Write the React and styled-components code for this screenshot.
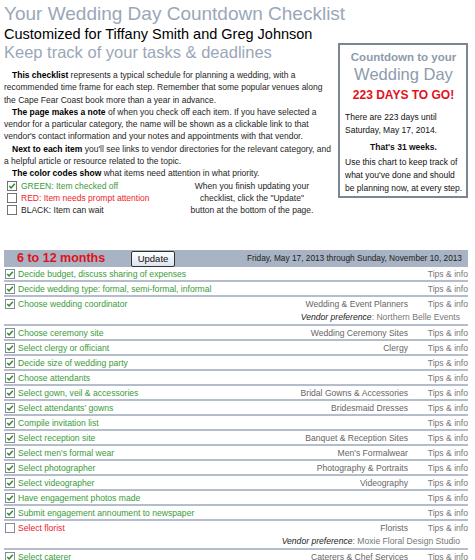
import React from 'react'
import styled, { createGlobalStyle } from 'styled-components'

const Global = createGlobalStyle`
  body {
    margin: 0;
    background: #fff;
    font-family: "Liberation Sans", Arial, sans-serif;
    color: #111;
  }
`

const Page = styled.div`
  width: 475px;
  padding: 2px 7px 0 4px;
  box-sizing: border-box;
`

const Title = styled.h1`
  margin: 0;
  font-weight: normal;
  font-size: 19px;
  line-height: 24px;
  color: #9aa7b8;
  white-space: nowrap;
`

const Customized = styled.div`
  font-size: 14.5px;
  line-height: 16px;
  color: #000;
`

const Subtitle = styled.h2`
  margin: 0;
  font-weight: normal;
  font-size: 16.5px;
  line-height: 20px;
  color: #9aa7b8;
  white-space: nowrap;
`

const Top = styled.div`
  display: flex;
  justify-content: space-between;
  align-items: flex-start;
`

const Intro = styled.div`
  width: 334px;
  padding-top: 7px;
  font-size: 8.5px;
  line-height: 12.3px;
  color: #1e1e1e;
  white-space: nowrap;
  p {
    margin: 0;
  }
  b {
    color: #000;
    margin-left: 8px;
  }
`

const Legend = styled.div`
  display: flex;
  justify-content: space-between;
`

const LegendList = styled.div`
  display: flex;
  flex-direction: column;
`

const LegendItem = styled.div`
  display: flex;
  align-items: center;
  gap: 4px;
  padding-left: 3px;
  height: 12.3px;
  color: ${p => p.$color};
`

const LegendNote = styled.div`
  text-align: center;
  width: 124px;
  margin-right: 24px;
`

const Box = styled.div`
  width: 130px;
  box-sizing: border-box;
  margin-top: 1px;
  border: 2px solid #7c8592;
  padding: 5px 4px 1px 5px;
  font-size: 8.5px;
  line-height: 13.3px;
  color: #111;
  white-space: nowrap;
  p { margin: 0; }
`

const BoxHead = styled.div`
  text-align: center;
  font-weight: bold;
  font-size: 11.5px;
  line-height: 14px;
  color: #8e9bab;
`

const BoxBig = styled.div`
  text-align: center;
  font-size: 16.5px;
  line-height: 20px;
  color: #8e9bab;
`

const BoxRed = styled.div`
  text-align: center;
  font-weight: bold;
  font-size: 12px;
  line-height: 14px;
  color: #e0121c;
  margin: 4px 0 9px;
`

const BoxCenter = styled.p`
  text-align: center;
  font-weight: bold;
  line-height: 14px;
  margin: 2px 0 2px !important;
`

const Section = styled.div`
  margin-top: 33px;
  font-size: 8.6px;
`

const SectionBar = styled.div`
  display: flex;
  align-items: center;
  height: 17px;
  background: #a8b3c3;
  padding: 0 6px 0 13px;
`

const Months = styled.div`
  width: 114px;
  font-weight: bold;
  font-size: 12.5px;
  color: #e0121c;
`

const UpdateButton = styled.button`
  font-family: "Liberation Sans", Arial, sans-serif;
  font-size: 9.5px;
  width: 44px;
  height: 16px;
  padding: 0;
  border: 1px solid #333;
  border-radius: 2px;
  background: linear-gradient(#fff, #dde3ee);
  color: #111;
  margin-top: 1px;
`

const Dates = styled.div`
  margin-left: auto;
  font-size: 8.3px;
  color: #222;
`

const Row = styled.div`
  border-top: ${p => (p.$first ? 'none' : '2px solid #b4bdca')};
  padding-top: 1px;
`

const RowMain = styled.div`
  display: grid;
  grid-template-columns: 1fr auto 60px;
  align-items: center;
  height: 12px;
`

const Task = styled.div`
  display: flex;
  align-items: center;
  gap: 3px;
  padding-left: 1px;
  color: ${p => (p.$done ? '#3a9b3a' : '#ee1c2a')};
`

const Vendor = styled.div`
  text-align: right;
  color: #666;
`

const Tips = styled.div`
  text-align: right;
  color: #777;
`

const Pref = styled.div`
  text-align: right;
  padding-right: 8px;
  color: #777;
  line-height: 14px;
  i { color: #222; }
`

const Check = ({ checked, small }) => (
  <svg width="10" height="10" viewBox="0 0 11 11" style={{ flex: 'none' }}>
    <rect x="0.5" y="0.5" width="10" height="10" fill="#fff" stroke={small ? '#666' : '#7a8290'} />
    {checked && <path d="M2.5 5.5 L4.5 7.6 L8.6 3" fill="none" stroke="#2f8a2f" strokeWidth="1.7" />}
  </svg>
)

const tasks = [
  { t: 'Decide budget, discuss sharing of expenses', done: true },
  { t: 'Decide wedding type: formal, semi-formal, informal', done: true },
  { t: 'Choose wedding coordinator', v: 'Wedding & Event Planners', pref: 'Northern Belle Events', done: true },
  { t: 'Choose ceremony site', v: 'Wedding Ceremony Sites', done: true },
  { t: 'Select clergy or officiant', v: 'Clergy', done: true },
  { t: 'Decide size of wedding party', done: true },
  { t: 'Choose attendants', done: true },
  { t: 'Select gown, veil & accessories', v: 'Bridal Gowns & Accessories', done: true },
  { t: "Select attendants' gowns", v: 'Bridesmaid Dresses', done: true },
  { t: 'Compile invitation list', done: true },
  { t: 'Select reception site', v: 'Banquet & Reception Sites', done: true },
  { t: "Select men's formal wear", v: "Men's Formalwear", done: true },
  { t: 'Select photographer', v: 'Photography & Portraits', done: true },
  { t: 'Select videographer', v: 'Videography', done: true },
  { t: 'Have engagement photos made', done: true },
  { t: 'Submit engagement annoument to newspaper', done: true },
  { t: 'Select florist', v: 'Florists', pref: 'Moxie Floral Design Studio', done: false },
  { t: 'Select caterer', v: 'Caterers & Chef Services', done: true },
]

export default function App() {
  return (
    <Page>
      <Global />
      <Title>Your Wedding Day Countdown Checklist</Title>
      <Customized>Customized for Tiffany Smith and Greg Johnson</Customized>
      <Top>
        <div>
          <Subtitle>Keep track of your tasks &amp; deadlines</Subtitle>
          <Intro>
            <p><b>This checklist</b> represents a typical schedule for planning a wedding, with a<br />recommended time frame for each step. Remember that some popular venues along<br />the Cape Fear Coast book more than a year in advance.</p>
            <p><b>The page makes a note</b> of when you check off each item. If you have selected a<br />vendor for a particular category, the name will be shown as a clickable link to that<br />vendor's contact information and your notes and appointments with that vendor.</p>
            <p><b>Next to each item</b> you'll see links to vendor directories for the relevant category, and<br />a helpful article or resource related to the topic.</p>
            <p><b>The color codes show</b> what items need attention in what priority.</p>
            <Legend>
              <LegendList>
                <LegendItem $color="#3a9b3a"><Check checked small />GREEN: Item checked off</LegendItem>
                <LegendItem $color="#ee1c2a"><Check small />RED: Item needs prompt attention</LegendItem>
                <LegendItem $color="#222"><Check small />BLACK: Item can wait</LegendItem>
              </LegendList>
              <LegendNote>When you finish updating your<br />checklist, click the "Update"<br />button at the bottom of the page.</LegendNote>
            </Legend>
          </Intro>
        </div>
        <Box>
          <BoxHead>Countdown to your</BoxHead>
          <BoxBig>Wedding Day</BoxBig>
          <BoxRed>223 DAYS TO GO!</BoxRed>
          <p>There are 223 days until<br />Saturday, May 17, 2014.</p>
          <BoxCenter>That's 31 weeks.</BoxCenter>
          <p>Use this chart to keep track of<br />what you've done and should<br />be planning now, at every step.</p>
        </Box>
      </Top>
      <Section>
        <SectionBar>
          <Months>6 to 12 months</Months>
          <UpdateButton>Update</UpdateButton>
          <Dates>Friday, May 17, 2013 through Sunday, November 10, 2013</Dates>
        </SectionBar>
        {tasks.map((r, i) => (
          <Row key={i} $first={i === 0}>
            <RowMain>
              <Task $done={r.done}><Check checked={r.done} />{r.t}</Task>
              <Vendor>{r.v}</Vendor>
              <Tips>Tips &amp; info</Tips>
            </RowMain>
            {r.pref && <Pref><i>Vendor preference</i>: {r.pref}</Pref>}
          </Row>
        ))}
      </Section>
    </Page>
  )
}
